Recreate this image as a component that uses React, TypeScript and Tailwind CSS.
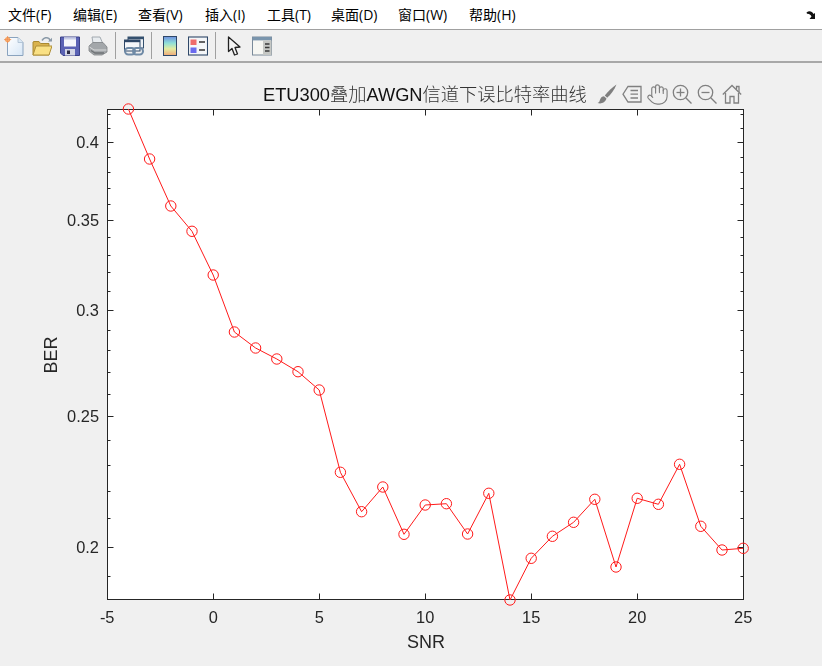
import { Hand } from "lucide-react";

const menus = ["文件(F)", "编辑(E)", "查看(V)", "插入(I)", "工具(T)", "桌面(D)", "窗口(W)", "帮助(H)"];
const menuLeft = ["w-[65px]", "w-[65px]", "w-[67px]", "w-[62px]", "w-[64px]", "w-[67px]", "w-[71px]", "w-[60px]"];

// page y of each point, snr -4 .. 25
const points = [
  109, 159, 206, 231.3, 275, 332, 348, 359, 371.7, 390, 472.3, 511.7, 487, 534.3, 505, 503.7, 534, 493.3, 600, 558.3,
  536.3, 522.3, 499.3, 567, 498.3, 504.3, 464.3, 526.3, 550, 548.3,
];

const xOf = (snr: number) => 213.2 + 21.2 * snr;
const yOf = (v: number) => 546.5 - 583 * Math.log(v / 0.2);

const LEFT = 107.5;
const RIGHT = 743.5;
const TOP = 109.5;
const BOTTOM = 599.5;

const xTicks = [-5, 0, 5, 10, 15, 20, 25];
const yMajor = [0.2, 0.25, 0.3, 0.35, 0.4];
const yMinor = [0.19, 0.21, 0.22, 0.23, 0.24, 0.26, 0.27, 0.28, 0.29, 0.31, 0.32, 0.33, 0.34, 0.36, 0.37, 0.38, 0.39, 0.41, 0.42];

function Plot() {
  const line = points.map((y, i) => `${xOf(i - 4)},${y}`).join(" ");
  return (
    <svg viewBox="0 63 822 603" className="block h-full w-full blur-[0.3px]" fontFamily="'Liberation Sans', 'Noto Sans CJK SC', sans-serif">
      <rect x={LEFT} y={TOP} width={RIGHT - LEFT} height={BOTTOM - TOP} fill="#fff" stroke="#262626" strokeWidth="1" />
      <g stroke="#262626" strokeWidth="1">
        {xTicks.map((t) => {
          const x = Math.round(xOf(t)) + 0.5;
          return (
            <g key={t}>
              <line x1={x} x2={x} y1={BOTTOM} y2={BOTTOM - 6} />
              <line x1={x} x2={x} y1={TOP} y2={TOP + 6} />
            </g>
          );
        })}
        {yMajor.map((v) => {
          const y = Math.round(yOf(v)) + 0.5;
          return (
            <g key={v}>
              <line x1={LEFT} x2={LEFT + 6} y1={y} y2={y} />
              <line x1={RIGHT} x2={RIGHT - 6} y1={y} y2={y} />
            </g>
          );
        })}
        {yMinor.map((v) => {
          const y = Math.round(yOf(v)) + 0.5;
          return (
            <g key={v}>
              <line x1={LEFT} x2={LEFT + 3} y1={y} y2={y} />
              <line x1={RIGHT} x2={RIGHT - 3} y1={y} y2={y} />
            </g>
          );
        })}
      </g>
      <polyline points={line} fill="none" stroke="#ff1a1a" strokeWidth="1" />
      {points.map((y, i) => (
        <circle key={i} cx={xOf(i - 4)} cy={y} r="5.2" fill="none" stroke="#ff1a1a" strokeWidth="1" />
      ))}
      <g fill="#262626" fontSize="16.4">
        {xTicks.map((t) => (
          <text key={t} x={xOf(t)} y={623} textAnchor="middle">
            {t}
          </text>
        ))}
        {yMajor.map((v) => (
          <text key={v} x={99} y={Math.round(yOf(v)) + 6} textAnchor="end">
            {v}
          </text>
        ))}
      </g>
      <text x={426} y={648} textAnchor="middle" fontSize="18" fill="#262626">
        SNR
      </text>
      <text x={57} y={355} textAnchor="middle" fontSize="18" fill="#262626" transform="rotate(-90 57 355)">
        BER
      </text>
      <text x={263} y={101} fontSize="18.25" fill="#111">
        ETU300
        <tspan fontWeight="300" fill="#333">叠加</tspan>
        AWGN
        <tspan fontWeight="300" fill="#333">信道下误比特率曲线</tspan>
      </text>
    </svg>
  );
}

function NewIcon() {
  return (
    <svg viewBox="0 0 20 20" className="h-5 w-5">
      <defs>
        <linearGradient id="page" x1="0" y1="0" x2="1" y2="1">
          <stop offset="0" stopColor="#ffffff" />
          <stop offset="1" stopColor="#d6e6f6" />
        </linearGradient>
      </defs>
      <path d="M3.5 1.5H14L19 6.5V19.5H3.5Z" fill="url(#page)" stroke="#8aa3be" strokeWidth="1" />
      <path d="M14 1.5V6.5H19" fill="#dbe8f4" stroke="#a8bccf" strokeWidth="0.8" />
      <circle cx="3.6" cy="3.6" r="2.6" fill="#f6a25e" />
      <circle cx="3.6" cy="3.6" r="1.2" fill="#fbe0b4" />
      <path d="M3.6 0V7.2M0 3.6H7.2" stroke="#f08a4b" strokeWidth="0.8" />
    </svg>
  );
}

function OpenIcon() {
  return (
    <svg viewBox="0 0 20 20" className="h-5 w-5">
      <path d="M1 6V19H17V7.5H8.5L7 5.5H2Z" fill="#d9b24d" stroke="#a98a32" strokeWidth="1" />
      <path d="M1 19L4 10H20L17 19Z" fill="#f9e084" stroke="#b0913a" strokeWidth="1" />
      <path d="M10 4.5C12 1.5 15 1 17 2.5L18.5 5" fill="none" stroke="#8b9aa8" strokeWidth="1.5" />
      <path d="M16 5.5H20V1.8Z" fill="#8b9aa8" />
    </svg>
  );
}

function SaveIcon() {
  return (
    <svg viewBox="0 0 20 20" className="h-5 w-5">
      <path d="M0.5 1H19.5V19.5H3L0.5 17Z" fill="#5a62b4" stroke="#3a4088" strokeWidth="1" />
      <rect x="4" y="1.5" width="12" height="9" fill="#f4f6fb" />
      <rect x="4" y="1.5" width="12" height="2" fill="#c6cbe6" />
      <rect x="5" y="13" width="10" height="6.5" fill="#d3d6e6" />
      <rect x="7" y="14.5" width="3" height="3.5" fill="#2a2a44" />
    </svg>
  );
}

function PrintIcon() {
  return (
    <svg viewBox="0 0 20 20" className="h-5 w-5">
      <path d="M5 7L4 1H12L15 8Z" fill="#e8ecef" stroke="#9aa2a8" strokeWidth="0.9" />
      <path d="M1 10L5 6.5H15L19 11V16L14 19H6L1 15Z" fill="#a3a7aa" stroke="#7d8184" strokeWidth="0.8" />
      <path d="M1.5 11L6 14H18.5" fill="none" stroke="#d8dadb" strokeWidth="1" />
      <path d="M3 14.5L7 17H16" fill="none" stroke="#6f7376" strokeWidth="1.4" />
    </svg>
  );
}

function LinkIcon() {
  return (
    <svg viewBox="0 0 20 20" className="h-5 w-5">
      <rect x="4" y="1" width="15.5" height="11" fill="#eef2f6" stroke="#34506e" strokeWidth="1" />
      <rect x="4" y="1" width="15.5" height="2.2" fill="#34506e" />
      <rect x="0.5" y="4" width="15.5" height="11" fill="#f5f7fa" stroke="#2f4868" strokeWidth="1" />
      <rect x="0.5" y="4" width="15.5" height="2.2" fill="#2f4868" />
      <rect x="1" y="12" width="10" height="6.5" rx="3.2" fill="none" stroke="#6f8aa6" strokeWidth="2" />
      <rect x="9" y="12" width="10" height="6.5" rx="3.2" fill="none" stroke="#6f8aa6" strokeWidth="2" />
    </svg>
  );
}

function ColorbarIcon() {
  return (
    <svg viewBox="0 0 20 20" className="h-5 w-5">
      <defs>
        <linearGradient id="bar" x1="0" y1="0" x2="0" y2="1">
          <stop offset="0" stopColor="#6f8fe0" />
          <stop offset="0.35" stopColor="#8fe0d8" />
          <stop offset="0.65" stopColor="#e4eca0" />
          <stop offset="1" stopColor="#f0a878" />
        </linearGradient>
      </defs>
      <rect x="3.5" y="0.5" width="13" height="19" fill="url(#bar)" stroke="#2f4868" strokeWidth="1" />
    </svg>
  );
}

function LegendIcon() {
  return (
    <svg viewBox="0 0 20 20" className="h-5 w-5">
      <rect x="0.5" y="1" width="19" height="18" fill="#f4f6f8" stroke="#2f4868" strokeWidth="1.1" />
      <rect x="2.5" y="3.5" width="6" height="5.5" fill="#ee6a6a" />
      <rect x="2.5" y="11.5" width="6" height="5.5" fill="#6a6aee" />
      <path d="M11 6H17M11 14H17" stroke="#333" strokeWidth="1.4" />
    </svg>
  );
}

function PointerIcon() {
  return (
    <svg viewBox="0 0 20 20" className="ml-[4px] h-5 w-5">
      <path d="M2.5 1V15.5L6 12.5L8.5 19L11.5 18L9 11.5L14 11Z" fill="#f4f4f4" stroke="#222" strokeWidth="1.3" strokeLinejoin="round" />
    </svg>
  );
}

function PlotToolsIcon() {
  return (
    <svg viewBox="0 0 20 20" className="h-5 w-5">
      <rect x="0.5" y="1" width="19" height="18" fill="#f6f6f2" stroke="#7a8a9a" strokeWidth="1" />
      <rect x="0.5" y="1" width="19" height="3.4" fill="#7a95ad" />
      <rect x="11" y="4.4" width="8.5" height="14.6" fill="#c5c7c4" />
      <path d="M13 8H17.5M13 11.5H17.5M13 15H17.5" stroke="#3a3a3a" strokeWidth="1.3" />
    </svg>
  );
}

function BrushIcon() {
  return (
    <svg viewBox="0 0 20 20" className="h-5 w-5">
      <path d="M19.5 0.5C15 3.5 10.5 8 7.8 11.5L10.2 13.8C14 10.5 17.5 5.5 19.5 0.5Z" fill="#7f7f7f" />
      <path d="M7 12.3C4 12.6 3.2 15 2.6 17C2.3 18 1.4 18.6 0.5 19C3.8 20 8 19.3 9.5 14.6Z" fill="#7f7f7f" />
    </svg>
  );
}

function ExportIcon() {
  return (
    <svg viewBox="0 0 20 20" className="h-5 w-5" fill="none" stroke="#808080" strokeWidth="1.3">
      <path d="M6 2.5H19V18H6L1 10.2Z" />
      <path d="M8.5 6.5H16M8.5 10.2H16M8.5 14H16" />
    </svg>
  );
}

function ZoomIcon({ plus }: { plus: boolean }) {
  return (
    <svg viewBox="0 0 20 20" className="h-5 w-5" fill="none" stroke="#808080" strokeWidth="1.3">
      <circle cx="8.5" cy="8.5" r="7.2" />
      <path d="M13.7 13.7L19.5 19.5" />
      <path d="M4.5 8.5H12.5" />
      {plus && <path d="M8.5 4.5V12.5" />}
    </svg>
  );
}

function HomeIcon() {
  return (
    <svg viewBox="0 0 20 20" className="h-5 w-5" fill="none" stroke="#808080" strokeWidth="1.3">
      <path d="M0.8 10.5L10 1.5L19.2 10.5" />
      <path d="M14.5 5.6V2.5H17V8" />
      <path d="M3.5 9V19H8V12.5H12V19H16.5V9" />
    </svg>
  );
}

export default function App() {
  return (
    <div className="flex h-[666px] w-[822px] flex-col overflow-hidden bg-[#f0f0f0] font-['Open_Sans','Noto_Sans_CJK_SC',sans-serif]">
      <div className="flex h-[30px] items-center border-b border-[#a0a0a0] bg-white pl-2 pr-[4px] text-[14px] text-black">
        {menus.map((m, i) => (
          <span key={m} className={menuLeft[i]}>
            {m}
          </span>
        ))}
        <svg viewBox="0 0 12 10" className="ml-auto h-[10px] w-[12px]">
          <path d="M0.5 2.5C3 0.5 6 1 7.5 4L9 3V9H3.5L5.5 6.5C4.5 4.5 3 3.5 1 3.8Z" fill="#111" />
        </svg>
      </div>
      <div className="flex h-[33px] items-center border-b-2 border-[#a8a8a8] bg-[#f0f0f0]">
        {[NewIcon, OpenIcon, SaveIcon, PrintIcon].map((Icon, i) => (
          <div key={i} className="flex w-7 justify-center blur-[0.3px]">
            <Icon />
          </div>
        ))}
        <div className="ml-[3px] mr-1 h-[27px] w-px bg-[#a0a0a0]" />
        <div className="flex w-7 justify-center blur-[0.3px]">
          <LinkIcon />
        </div>
        <div className="ml-[3px] mr-1 h-[27px] w-px bg-[#a0a0a0]" />
        {[ColorbarIcon, LegendIcon].map((Icon, i) => (
          <div key={i} className="flex w-7 justify-center blur-[0.3px]">
            <Icon />
          </div>
        ))}
        <div className="ml-[3px] mr-1 h-[27px] w-px bg-[#a0a0a0]" />
        {[PointerIcon, PlotToolsIcon].map((Icon, i) => (
          <div key={i} className="flex w-7 justify-center blur-[0.3px]">
            <Icon />
          </div>
        ))}
      </div>
      <div className="relative min-h-0 flex-1">
        <Plot />
        <div className="absolute left-[597px] top-[21px] flex gap-[5px] text-[#808080] blur-[0.3px]">
          <BrushIcon />
          <ExportIcon />
          <Hand className="-m-[1.5px] h-[23px] w-[23px]" strokeWidth={1.2} />
          <ZoomIcon plus />
          <ZoomIcon plus={false} />
          <HomeIcon />
        </div>
      </div>
    </div>
  );
}
